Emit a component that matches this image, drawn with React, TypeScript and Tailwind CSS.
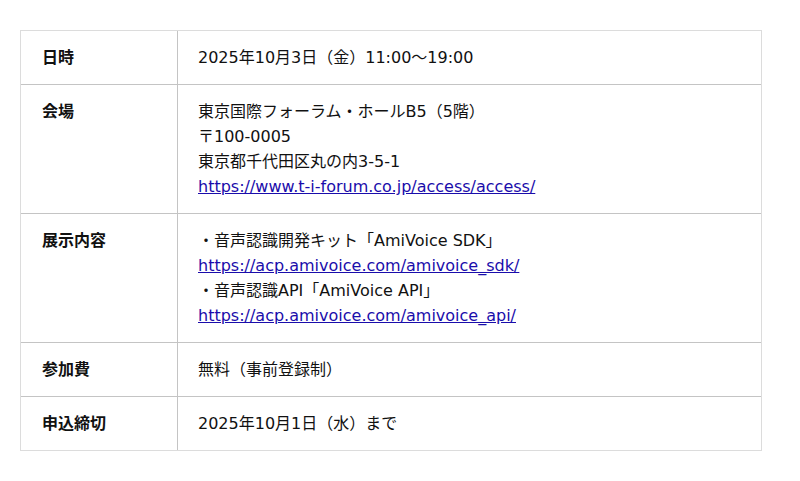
import React from "react";

const rows: { label: string; lines: { text: string; link?: boolean }[] }[] = [
  { label: "日時", lines: [{ text: "2025年10月3日（金）11:00〜19:00" }] },
  {
    label: "会場",
    lines: [
      { text: "東京国際フォーラム・ホールB5（5階）" },
      { text: "〒100-0005" },
      { text: "東京都千代田区丸の内3-5-1" },
      { text: "https://www.t-i-forum.co.jp/access/access/", link: true },
    ],
  },
  {
    label: "展示内容",
    lines: [
      { text: "・音声認識開発キット「AmiVoice SDK」" },
      { text: "https://acp.amivoice.com/amivoice_sdk/", link: true },
      { text: "・音声認識API「AmiVoice API」" },
      { text: "https://acp.amivoice.com/amivoice_api/", link: true },
    ],
  },
  { label: "参加費", lines: [{ text: "無料（事前登録制）" }] },
  { label: "申込締切", lines: [{ text: "2025年10月1日（水）まで" }] },
];

export default function App() {
  return (
    <div
      className="bg-white w-[800px] h-[481px] pt-[30px] pl-[20px] text-[#111] text-[16px] leading-[25px]"
      style={{ fontFamily: '"DejaVu Sans", "Noto Sans CJK JP", sans-serif' }}
    >
      <div className="w-[742px] border border-[#dcdcdc]">
        {rows.map((r, i) => (
          <div
            key={i}
            className={`flex ${i > 0 ? "border-t border-[#c4c4c4]" : ""}`}
          >
            <div className="w-[157px] shrink-0 border-r border-[#c4c4c4] pl-[21px] pr-4 py-[14px] font-bold">
              {r.label}
            </div>
            <div className="flex-1 pl-[20px] pr-4 py-[14px] flex flex-col">
              {r.lines.map((l, j) =>
                l.link ? (
                  <a key={j} href="#" className="text-[#1a0dab] underline">
                    {l.text}
                  </a>
                ) : (
                  <span key={j}>{l.text}</span>
                )
              )}
            </div>
          </div>
        ))}
      </div>
    </div>
  );
}
